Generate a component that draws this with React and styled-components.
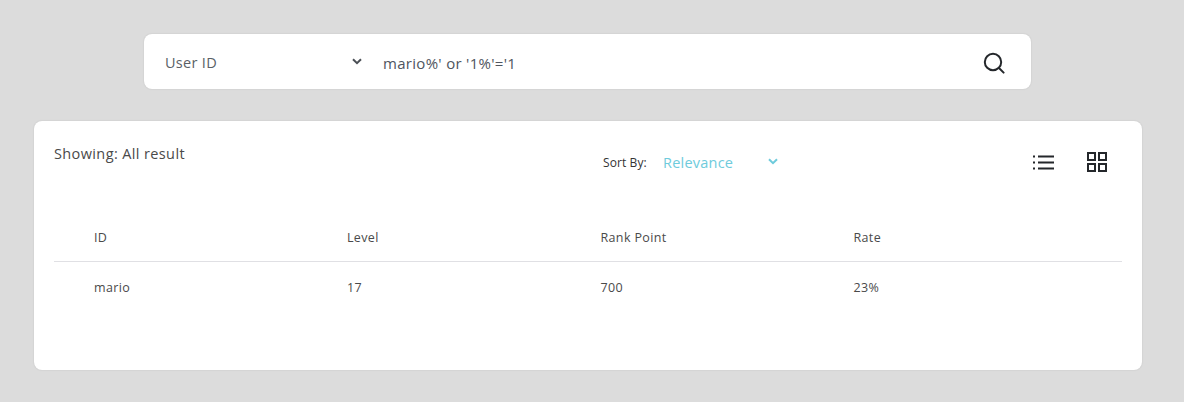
import React from "react";
import styled, { createGlobalStyle } from "styled-components";

const Global = createGlobalStyle`
  html, body { margin: 0; padding: 0; background: #dcdcdc; }
  body { font-family: "Open Sans", "Noto Sans", sans-serif; color: #4a4a4a; }
`;
const Page = styled.div`
  width: 1184px; height: 402px; box-sizing: border-box; overflow: hidden;
  padding: 34px 42px 0 34px;
  display: flex; flex-direction: column; align-items: flex-start;
`;
const SearchBar = styled.div`
  width: 887px; height: 55px; margin-left: 110px; box-sizing: border-box; flex: none;
  background: #fff; border-radius: 8px; box-shadow: 0 0 2px rgba(0,0,0,.12);
  display: flex; align-items: center; padding: 2px 26px 0 21px;
`;
const FilterLabel = styled.span`
  width: 187px; font-size: 14.5px; letter-spacing: .3px; color: #5a5f66;
`;
const FilterChevron = styled.svg`
  width: 10px; height: 7px; flex: none; margin-right: 21px; position: relative; top: -1px;
`;
const Query = styled.span`
  flex: 1; font-size: 15px; letter-spacing: .3px; color: #4f5560;
`;
const Icon = styled.svg`
  display: block; flex: none; color: #24272b;
`;
const Card = styled.div`
  align-self: stretch; height: 249px; margin-top: 32px; flex: none; box-sizing: border-box;
  background: #fff; border-radius: 8px; box-shadow: 0 0 2px rgba(0,0,0,.12);
  padding: 20px;
`;
const Toolbar = styled.div`
  display: grid; grid-template-columns: 549px 1fr auto; height: 42px;
`;
const Showing = styled.span`
  font-size: 14.5px; letter-spacing: .38px; line-height: 25px; color: #4a4a4a;
`;
const Sort = styled.div`
  display: flex; align-items: center; height: 42px;
`;
const SortLabel = styled.span`
  font-size: 12px; letter-spacing: .1px; color: #333; width: 60px;
`;
const SortValue = styled.span`
  font-size: 14.5px; letter-spacing: .22px; color: #6ecbdc; width: 105px;
`;
const SortChevron = styled.svg`
  width: 10px; height: 7px; position: relative; top: -1px;
`;
const Views = styled.div`
  display: flex; align-items: center; gap: 33px; height: 42px; padding-right: 15px;
`;
const Table = styled.div`
  margin-top: 31px;
`;
const Row = styled.div`
  display: grid; grid-template-columns: 253px 253.5px 253px 1fr; padding-left: 40px;
  align-items: center; height: ${p => p.$height}px; font-size: 12.5px; letter-spacing: .35px; color: #4a4a4a;
  border-bottom: ${p => (p.$head ? "1px solid #e0e0e4" : "none")};
`;

const Chevron = ({ as: C, color }) => (
  <C viewBox="0 0 10 7" fill="none" stroke={color} strokeWidth="2">
    <path d="M1 1.2 5 5.2 9 1.2" />
  </C>
);

export default function App() {
  return (
    <>
      <Global />
      <Page>
        <SearchBar>
          <FilterLabel>User ID</FilterLabel>
          <Chevron as={FilterChevron} color="#4a4f55" />
          <Query>mario%' or '1%'='1</Query>
          <Icon width="22" height="22" viewBox="0 0 22 22" fill="none" stroke="currentColor" strokeWidth="2">
            <circle cx="10" cy="10" r="8.2" />
            <path d="M16 16l4.6 4.6" strokeLinecap="round" />
          </Icon>
        </SearchBar>
        <Card>
          <Toolbar>
            <Showing>Showing: All result</Showing>
            <Sort>
              <SortLabel>Sort By:</SortLabel>
              <SortValue>Relevance</SortValue>
              <Chevron as={SortChevron} color="#6ecbdc" />
            </Sort>
            <Views>
              <Icon width="21" height="15" viewBox="0 0 21 15" fill="none" stroke="currentColor" strokeWidth="2">
                <path d="M5 1.5h16M5 7.5h16M5 13.5h16" />
                <path d="M0 1.5h2M0 7.5h2M0 13.5h2" />
              </Icon>
              <Icon width="20" height="20" viewBox="0 0 20 20" fill="none" stroke="currentColor" strokeWidth="2">
                <rect x="1" y="1" width="7" height="7" />
                <rect x="12" y="1" width="7" height="7" />
                <rect x="1" y="12" width="7" height="7" />
                <rect x="12" y="12" width="7" height="7" />
              </Icon>
            </Views>
          </Toolbar>
          <Table>
            <Row $head $height={47}>
              <span>ID</span><span>Level</span><span>Rank Point</span><span>Rate</span>
            </Row>
            <Row $height={50}>
              <span>mario</span><span>17</span><span>700</span><span>23%</span>
            </Row>
          </Table>
        </Card>
      </Page>
    </>
  );
}
